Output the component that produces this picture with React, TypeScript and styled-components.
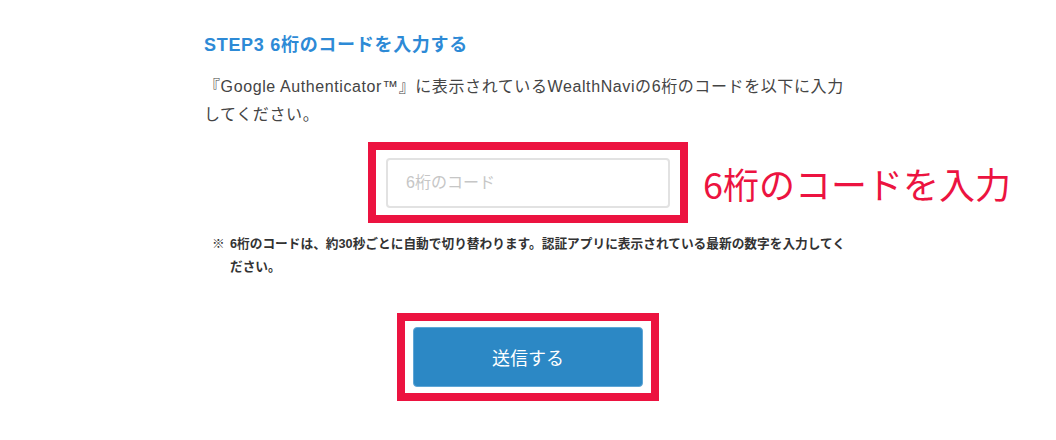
import styled, { createGlobalStyle } from "styled-components";

const GlobalStyle = createGlobalStyle`
  html, body {
    margin: 0;
    padding: 0;
    background: #fff;
  }
  body {
    font-family: "Liberation Sans", "Noto Sans CJK JP", sans-serif;
    color: #333;
  }
`;

const Content = styled.main`
  width: 648px;
  margin: 0 auto;
  padding-top: 33px;
`;

const StepTitle = styled.h2`
  margin: 0;
  font-size: 18px;
  line-height: 24px;
  font-weight: 700;
  letter-spacing: 0.7px;
  color: #2d8ad6;
`;

const Lead = styled.p`
  margin: 16px 0 0;
  font-size: 16px;
  line-height: 28px;
  letter-spacing: 0.6px;
  color: #444;
`;

const InputRow = styled.div`
  display: grid;
  grid-template-columns: minmax(0, 1fr) auto minmax(0, 1fr);
  align-items: center;
  margin-top: 13px;
`;

const Highlight = styled.div<{ $pad: string }>`
  grid-column: 2;
  border: 8px solid #ec1340;
  padding: ${(p) => p.$pad};
  background: #fff;
`;

const CodeInput = styled.input`
  display: block;
  box-sizing: border-box;
  width: 284px;
  height: 50px;
  border: 2px solid #e2e2e2;
  border-radius: 4px;
  padding: 0 18px;
  font-family: "Liberation Sans", "Noto Sans CJK JP", sans-serif;
  font-size: 16px;
  color: #333;
  outline: none;

  &::placeholder {
    color: #c6c6c6;
  }
`;

const Annotation = styled.span`
  grid-column: 3;
  padding-left: 15px;
  font-family: "Noto Sans CJK JP", sans-serif;
  font-size: 36px;
  font-weight: 400;
  color: #ec1340;
  white-space: nowrap;
`;

const Note = styled.div`
  display: flex;
  margin-top: 10px;
  padding-left: 8px;
  font-size: 12.7px;
  line-height: 23px;
  font-weight: 700;
  color: #333;
`;

const NoteMark = styled.span`
  flex: 0 0 18px;
`;

const NoteText = styled.span`
  min-width: 0;
`;

const ButtonRow = styled.div`
  display: flex;
  justify-content: center;
  margin-top: 34px;
`;

const SubmitButton = styled.button`
  display: block;
  width: 230px;
  height: 60px;
  border: 1px solid #5fa6d6;
  border-radius: 4px;
  background: #2c88c5;
  color: #fff;
  font-family: "Noto Sans CJK JP", sans-serif;
  font-size: 18px;
  cursor: pointer;
`;

export default function App() {
  return (
    <>
      <GlobalStyle />
      <Content>
        <StepTitle>STEP3 6桁のコードを入力する</StepTitle>
        <Lead>
          『Google Authenticator™』に表示されているWealthNaviの6桁のコードを以下に入力してください。
        </Lead>
        <InputRow>
          <Highlight $pad="8px 10px 7px">
            <CodeInput type="text" placeholder="6桁のコード" />
          </Highlight>
          <Annotation>6桁のコードを入力</Annotation>
        </InputRow>
        <Note>
          <NoteMark>※</NoteMark>
          <NoteText>
            6桁のコードは、約30秒ごとに自動で切り替わります。認証アプリに表示されている最新の数字を入力してください。
          </NoteText>
        </Note>
        <ButtonRow>
          <Highlight $pad="6px 8px">
            <SubmitButton type="button">送信する</SubmitButton>
          </Highlight>
        </ButtonRow>
      </Content>
    </>
  );
}
